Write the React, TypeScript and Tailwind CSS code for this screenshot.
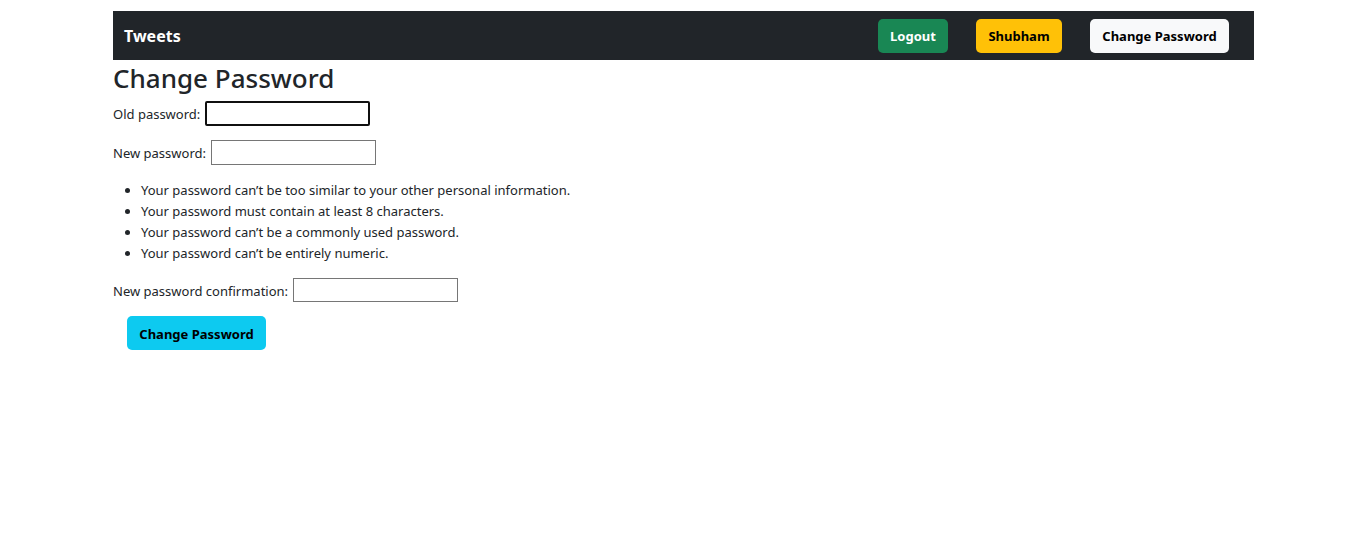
import type { ReactNode } from "react";

function PasswordField({
  id,
  label,
  autoFocus = false,
  height = "h-[25px]",
}: {
  id: string;
  label: string;
  autoFocus?: boolean;
  height?: string;
}) {
  return (
    <div className="flex items-center gap-[5px]">
      <label htmlFor={id} className="pt-0.5">{label}</label>
      <input
        id={id}
        type="password"
        autoFocus={autoFocus}
        className={`${height} w-[165px] border border-[#767676] bg-white px-0.5 focus:rounded-xs focus:border-2 focus:border-[#101010] focus:outline-none`}
      />
    </div>
  );
}

function Button({ type = "button", className, children }: { type?: "button" | "submit"; className: string; children: ReactNode }) {
  return (
    <button type={type} className={`h-[34px] rounded-[5px] pt-0.5 text-[13px] font-bold ${className}`}>
      {children}
    </button>
  );
}

const rules = [
  "Your password can’t be too similar to your other personal information.",
  "Your password must contain at least 8 characters.",
  "Your password can’t be a commonly used password.",
  "Your password can’t be entirely numeric.",
];

export default function App() {
  return (
    <div className="pt-[11px] pl-0.5 font-['Noto_Sans','Open_Sans',sans-serif] text-[13px] leading-[21px] text-[#212529]">
      <div className="mx-auto w-full max-w-[1141px]">
        <nav className="flex h-[49px] items-center justify-between bg-[#212529] pr-[25px] pl-[11px]">
          <a href="#" className="text-base font-bold text-white">Tweets</a>
          <div className="flex gap-7">
            <Button className="w-[70px] bg-[#198754] text-white">Logout</Button>
            <Button className="w-[86px] bg-[#ffc107] text-black">Shubham</Button>
            <Button className="w-[139px] bg-[#f8f9fa] text-black">Change Password</Button>
          </div>
        </nav>
        <main>
          <h1 className="mt-1 mb-2 text-[26px] leading-[29px] font-medium">Change Password</h1>
          <form className="flex flex-col items-start" onSubmit={(e) => e.preventDefault()}>
            <PasswordField id="old-password" label="Old password:" autoFocus />
            <div className="mt-3.5">
              <PasswordField id="new-password" label="New password:" />
            </div>
            <ul className="mt-[15px] mb-3.5 list-disc pl-7">
              {rules.map((rule) => (
                <li key={rule}>{rule}</li>
              ))}
            </ul>
            <PasswordField id="confirm-password" label="New password confirmation:" height="h-6" />
            <Button type="submit" className="mt-3.5 ml-3.5 w-[139px] bg-[#0dcaf0] text-black">
              Change Password
            </Button>
          </form>
        </main>
      </div>
    </div>
  );
}
